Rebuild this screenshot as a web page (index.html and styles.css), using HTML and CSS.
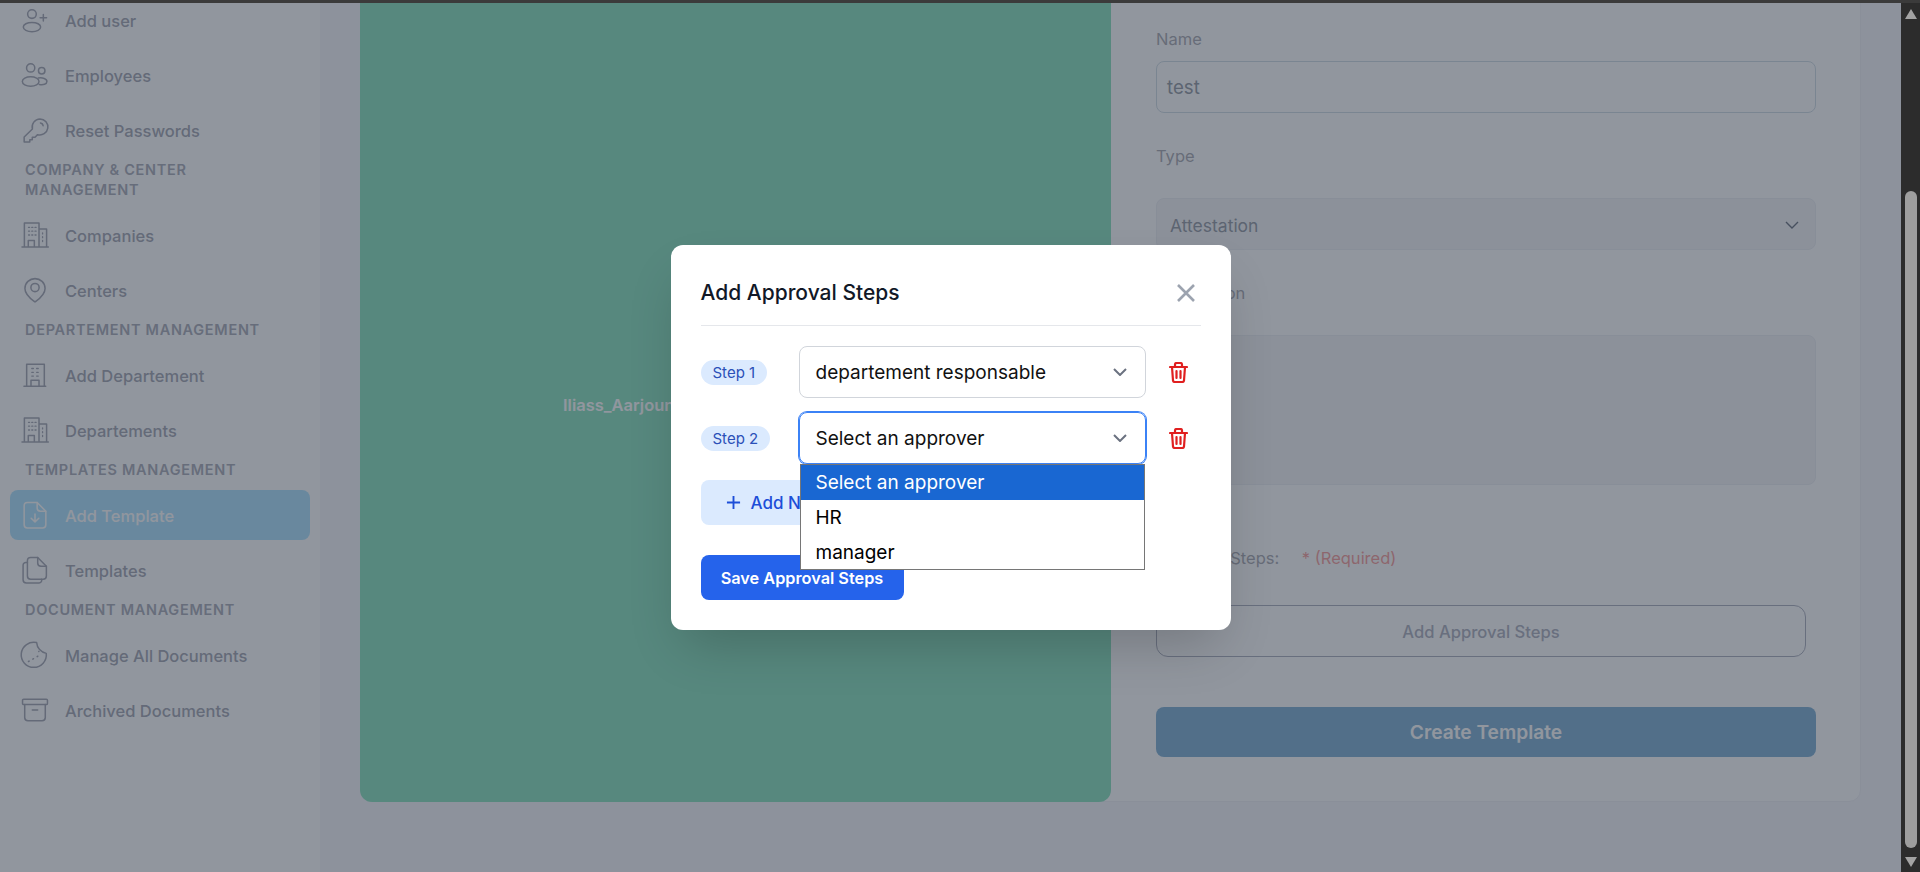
FILE: index.html
```html
<!DOCTYPE html>
<html lang="en">
<head>
    <meta charset="UTF-8">
    <title>Add Template</title>
    <link rel="stylesheet" href="styles.css">
</head>
<body>
    <div class="topline"></div>
    <div class="window">
        <div class="viewport">
            <aside class="sidebar">
                <a class="nav-item"><svg class="nav-icon" viewBox="0 0 24 24"><circle cx="9.2" cy="6.5" r="4"/><ellipse cx="9.2" cy="18.5" rx="8" ry="4.3"/><path d="M19.7 6.9v6M16.7 9.9h6"/></svg>Add user</a>
                <a class="nav-item"><svg class="nav-icon" viewBox="0 0 24 24"><circle cx="8" cy="5.5" r="3.8"/><circle cx="18.2" cy="8" r="3"/><ellipse cx="8" cy="18" rx="7.7" ry="4.3"/><path d="M15 14.8c4-.6 8 .6 8 3.2s-3.5 3.4-7 2.8"/></svg>Employees</a>
                <a class="nav-item"><svg class="nav-icon" viewBox="0 0 24 24"><path d="M16.6 1.8a7.4 7.4 0 1 1-2.2 14.5L12 18.700H9.500v2.300H7.200v2H2v-4.500l7.600-7.500A7.400 7.400 0 0 1 16.600 1.800z"/><path d="M17 5.500a3 3 0 0 1 2.500 2.600"/></svg>Reset Passwords</a>
                <div class="nav-label">Company &amp; Center Management</div>
                <a class="nav-item"><svg class="nav-icon" viewBox="0 0 24 24"><path d="M0 23h24.300M2.200 23V1h13.500v22M15.700 6.500h7v16.500M5.800 23v-6h5.600v6"/><path class="dots" d="M6 5h1M9 5h1M12 5h1M6 8.500h1M9 8.500h1M12 8.500h1M6 12h1M9 12h1M12 12h1M19 10v1M19 13.500v1M19 17v1"/></svg>Companies</a>
                <a class="nav-item"><svg class="nav-icon" viewBox="0 0 24 24"><path d="M12 1.500c5 0 9.300 3.800 9.300 9 0 6-6 10-9.300 12.500C8.700 20.500 2.700 16.500 2.700 10.500c0-5.200 4.300-9 9.300-9z"/><circle cx="12" cy="9.700" r="3.800"/></svg>Centers</a>
                <div class="nav-label">Departement Management</div>
                <a class="nav-item"><svg class="nav-icon" viewBox="0 0 24 24"><path d="M1.800 22.300h20.100M4.300 22.300V2h16.300v20.300M8.300 22.300v-5.500h7.400v5.500"/><path class="dots" d="M9 6h1.500M13.500 6H15M9 9.500h1.500M13.500 9.500H15M9 13h1.500M13.500 13H15"/></svg>Add Departement</a>
                <a class="nav-item"><svg class="nav-icon" viewBox="0 0 24 24"><path d="M0 23h24.300M2.200 23V1h13.500v22M15.700 6.500h7v16.500M5.800 23v-6h5.600v6"/><path class="dots" d="M6 5h1M9 5h1M12 5h1M6 8.500h1M9 8.500h1M12 8.500h1M6 12h1M9 12h1M12 12h1M19 10v1M19 13.500v1M19 17v1"/></svg>Departements</a>
                <div class="nav-label">Templates Management</div>
                <a class="nav-item active"><svg class="nav-icon" viewBox="0 0 24 24"><path d="M5 .5h9l8 8v12.500a3 3 0 0 1-3 3H5a3 3 0 0 1-3-3V3.500a3 3 0 0 1 3-3z"/><path d="M14 .5v5a3 3 0 0 0 3 3h5M12 11v7M8.500 15l3.500 3.500 3.500-3.500"/></svg>Add Template</a>
                <a class="nav-item"><svg class="nav-icon" viewBox="0 0 24 24"><path d="M8 .5h6.500l8 8v9a3 3 0 0 1-3 3H8a3 3 0 0 1-3-3V3.500a3 3 0 0 1 3-3z"/><path d="M14.500.5v5a3 3 0 0 0 3 3h5M5 5H3.500A2.500 2.500 0 0 0 1 7.500V21a3 3 0 0 0 3 3h11.500a2.500 2.500 0 0 0 2.500-3.500"/></svg>Templates</a>
                <div class="nav-label">Document Management</div>
                <a class="nav-item"><svg class="nav-icon" viewBox="0 0 24 24"><path d="M22.400 10.500A11.600 11.600 0 1 1 13.500.5c.3 5 4 9 8.900 10z"/><path d="M6 18l.6-.4M10 15.800l.6-.4M14 13.500l.6-.4M15.500 8.800l.1-.1"/></svg>Manage All Documents</a>
                <a class="nav-item"><svg class="nav-icon" viewBox="0 0 24 24"><rect x=".5" y="2" width="23" height="5" rx="1"/><path d="M2.500 7v12a3 3 0 0 0 3 3h13a3 3 0 0 0 3-3V7M9.500 12h5"/></svg>Archived Documents</a>
            </aside>

            <main class="main">
                <div class="template-card">
                    <div class="preview"><span class="preview-name">Iliass_Aarjoun</span></div>
                    <form class="template-form">
                        <label class="field-label">Name</label>
                        <div class="input">test</div>
                        <label class="field-label wide-label">Type</label>
                        <div class="input muted">Attestation
                            <svg class="chevron thin" viewBox="0 0 14 8"><path d="M1 1l6 6 6-6"/></svg>
                        </div>
                        <label class="field-label wide-label">Description</label>
                        <div class="textarea"></div>
                        <div class="field-label steps-label">Approval Steps: <span class="required">* (Required)</span></div>
                        <button type="button" class="outline-btn">Add Approval Steps</button>
                        <button type="button" class="create-btn">Create Template</button>
                    </form>
                </div>
            </main>

            <div class="overlay">
                <div class="modal">
                    <div class="modal-head">
                        <h2>Add Approval Steps</h2>
                        <svg class="close" viewBox="0 0 18 18"><path d="M1 1l16 16M17 1L1 17"/></svg>
                    </div>
                    <div class="step-row">
                        <span class="pill">Step 1</span>
                        <div class="select">departement responsable
                            <svg class="chevron" viewBox="0 0 14 8"><path d="M1 1l6 6 6-6"/></svg>
                        </div>
                        <svg class="trash" viewBox="0 0 19 21"><path d="M1 5h17M6 5V2.500A1.500 1.500 0 0 1 7.500 1h4A1.500 1.500 0 0 1 13 2.500V5M3 5l1 13.500A1.700 1.700 0 0 0 5.700 20h7.600a1.700 1.700 0 0 0 1.700-1.500L16 5M7.500 9v7M11.500 9v7"/></svg>
                    </div>
                    <div class="step-row">
                        <span class="pill">Step 2</span>
                        <div class="select focused">Select an approver
                            <svg class="chevron" viewBox="0 0 14 8"><path d="M1 1l6 6 6-6"/></svg>
                            <ul class="dropdown">
                                <li class="selected">Select an approver</li>
                                <li>HR</li>
                                <li>manager</li>
                            </ul>
                        </div>
                        <svg class="trash" viewBox="0 0 19 21"><path d="M1 5h17M6 5V2.500A1.500 1.500 0 0 1 7.500 1h4A1.500 1.500 0 0 1 13 2.500V5M3 5l1 13.500A1.700 1.700 0 0 0 5.700 20h7.600a1.700 1.700 0 0 0 1.700-1.500L16 5M7.500 9v7M11.500 9v7"/></svg>
                    </div>
                    <button type="button" class="add-step">
                        <svg viewBox="0 0 16 16"><path d="M8 1v14M1 8h14"/></svg>
                        Add New Step
                    </button>
                    <button type="button" class="save-btn">Save Approval Steps</button>
                </div>
            </div>
        </div>
        <div class="scrollbar">
            <span class="arrow up"></span>
            <span class="thumb"></span>
            <span class="arrow down"></span>
        </div>
    </div>
</body>
</html>
```

FILE: styles.css
```css
* {
    box-sizing: border-box;
}
html, body {
    height: 100%;
    margin: 0;
    overflow: hidden;
}
body {
    display: flex;
    flex-direction: column;
    font-family: Inter, "Liberation Sans", sans-serif;
    background: #f7f7fb;
}
.topline {
    height: 3px;
    background: #3b3b3b;
}
.window {
    flex: 1;
    display: flex;
    min-height: 0;
}
.viewport {
    flex: 1;
    display: flex;
    position: relative;
    overflow: hidden;
}

/* sidebar */
.sidebar {
    width: 320px;
    flex-shrink: 0;
    margin-top: -8px;
    padding: 0 10px;
    display: flex;
    flex-direction: column;
    gap: 5px;
    background: #fff;
    color: #a5a7b3;
}
.nav-item {
    height: 50px;
    flex-shrink: 0;
    display: flex;
    align-items: center;
    gap: 17px;
    padding: 2px 0 0 12px;
    border-radius: 8px;
    font-size: 16.500px;
    font-weight: 500;
}
.nav-item.active {
    background: #afe3ff;
    color: #fff;
}
.nav-icon {
    width: 26px;
    height: 26px;
    margin-top: -2px;
    flex-shrink: 0;
    overflow: visible;
    fill: none;
    stroke: currentColor;
    stroke-width: 1.4;
    stroke-linecap: round;
    stroke-linejoin: round;
}
.nav-icon .dots {
    stroke-width: 1.2;
}
.nav-label {
    padding-left: 15px;
    margin-bottom: 5px;
    width: 260px;
    font-size: 14.500px;
    line-height: 20px;
    font-weight: 600;
    letter-spacing: .7px;
    text-transform: uppercase;
    color: #abadb8;
}

/* page behind the modal */
.main {
    flex: 1;
    min-width: 0;
    margin-top: -20px;
    padding: 0 40px;
}
.template-card {
    display: grid;
    grid-template-columns: 750px 1fr;
    background: #fff;
    border: 1px solid #f0f0f5;
    border-radius: 12px;
}
.preview {
    margin: -1px 0 -1px -1px;
    padding: 412px 0 0 203px;
    background: #8be3bf;
    border-radius: 12px;
}
.preview-name {
    color: #fff;
    font-size: 16.500px;
    font-weight: 600;
}
.template-form {
    padding: 45px 44px 44px 45px;
    display: flex;
    flex-direction: column;
    align-items: flex-start;
}
.field-label {
    height: 20px;
    line-height: 20px;
    font-size: 16.500px;
    color: #ababb2;
    margin-bottom: 12px;
}
.wide-label {
    margin-bottom: 32px;
}
.input {
    width: 100%;
    height: 52px;
    margin-bottom: 33px;
    padding-left: 10px;
    display: flex;
    align-items: center;
    justify-content: space-between;
    border: 1px solid #d1dde5;
    border-radius: 8px;
    font-size: 18.700px;
    color: #959ba5;
}
.input.muted {
    padding: 2px 16px 0 13px;
    background: #f5f5f7;
    border-color: #eceef3;
    font-size: 17.500px;
}
.textarea {
    width: 100%;
    height: 150px;
    margin-bottom: 63px;
    background: #f5f5f7;
    border: 1px solid #eceef3;
    border-radius: 8px;
}
.steps-label {
    margin-bottom: 37px;
}
.required {
    margin-left: 18px;
    color: #f79f9d;
}
.outline-btn {
    width: 650px;
    height: 52px;
    margin-bottom: 50px;
    padding-top: 3px;
    background: transparent;
    border: 1px solid #adb0be;
    border-radius: 12px;
    font: 500 16.600px Inter, sans-serif;
    color: #aeb1bf;
}
.create-btn {
    width: 100%;
    height: 50px;
    background: #81b1d5;
    border: none;
    border-radius: 8px;
    font: 600 19.200px Inter, sans-serif;
    color: #ffffff;
}

/* modal */
.overlay {
    position: absolute;
    inset: 0;
    display: flex;
    align-items: center;
    justify-content: center;
    background: rgba(35, 45, 62, .5);
}
.modal {
    width: 560px;
    padding: 30px;
    background: #fff;
    border-radius: 12px;
    box-shadow: 0 25px 50px -12px rgba(0, 0, 0, .2);
}
.modal-head {
    height: 51px;
    margin-bottom: 20px;
    padding: 0 6px 15px 0;
    display: flex;
    align-items: center;
    justify-content: space-between;
    border-bottom: 1px solid #e5e7eb;
}
.modal-head h2 {
    margin: 0;
    font-size: 21px;
    font-weight: 500;
    color: #111827;
}
.close {
    width: 18px;
    height: 18px;
    fill: none;
    stroke: #9ca3af;
    stroke-width: 2.600;
}
.step-row {
    display: grid;
    grid-template-columns: 98px 347px auto;
    align-items: center;
    margin-bottom: 14px;
}
.pill {
    justify-self: start;
    height: 25px;
    padding: 0 12px;
    display: flex;
    align-items: center;
    border-radius: 13px;
    background: #dbeafe;
    color: #2b50b8;
    font-size: 15px;
}
.select {
    position: relative;
    height: 52px;
    padding: 0 18px 0 16px;
    display: flex;
    align-items: center;
    justify-content: space-between;
    border: 1px solid #d1d5db;
    border-radius: 8px;
    font-size: 19px;
    color: #111;
}
.select.focused {
    border-color: #3b82f6;
    box-shadow: 0 0 0 1px #3b82f6;
}
.chevron {
    width: 14px;
    height: 8px;
    fill: none;
    stroke: #6b7280;
    stroke-width: 2;
}
.chevron.thin {
    stroke-width: 1.400;
}
.dropdown {
    position: absolute;
    left: 0;
    right: 0;
    top: 51px;
    height: 106px;
    overflow: hidden;
    margin: 0;
    padding: 0;
    list-style: none;
    background: #fff;
    border: 1px solid #767676;
    z-index: 2;
}
.dropdown li {
    height: 35px;
    line-height: 35px;
    padding-left: 15px;
    font-size: 19px;
    color: #000;
}
.dropdown li.selected {
    background: #1967d2;
    color: #fff;
}
.trash {
    width: 19px;
    height: 21px;
    margin-left: 23px;
    fill: none;
    stroke: #e02020;
    stroke-width: 2.200;
    stroke-linecap: round;
    stroke-linejoin: round;
}
.add-step {
    width: 215px;
    height: 45px;
    margin-top: 16px;
    padding-left: 25px;
    display: flex;
    align-items: center;
    gap: 10px;
    background: #dbeafe;
    border: none;
    border-radius: 8px;
    color: #1d4ed8;
    font: 500 17px Inter, sans-serif;
    white-space: nowrap;
}
.add-step svg {
    width: 15px;
    height: 15px;
    fill: none;
    stroke: currentColor;
    stroke-width: 2;
}
.save-btn {
    display: block;
    width: 203px;
    height: 45px;
    margin-top: 30px;
    background: #2563eb;
    border: none;
    border-radius: 8px;
    color: #fff;
    font: 600 16.300px Inter, sans-serif;
}

/* scrollbar track drawn by hand, the screenshot has it */
.scrollbar {
    width: 19px;
    flex-shrink: 0;
    padding-top: 6px;
    display: flex;
    flex-direction: column;
    align-items: center;
    background: #2c2c2c;
}
.arrow {
    width: 0;
    height: 0;
    border-left: 6px solid transparent;
    border-right: 6px solid transparent;
}
.arrow.up {
    border-bottom: 10px solid #a3a3a3;
}
.arrow.down {
    border-top: 10px solid #a3a3a3;
}
.thumb {
    width: 12px;
    height: 657px;
    margin: 172px 0 9px;
    border-radius: 6px;
    background: #9e9e9e;
}
```
